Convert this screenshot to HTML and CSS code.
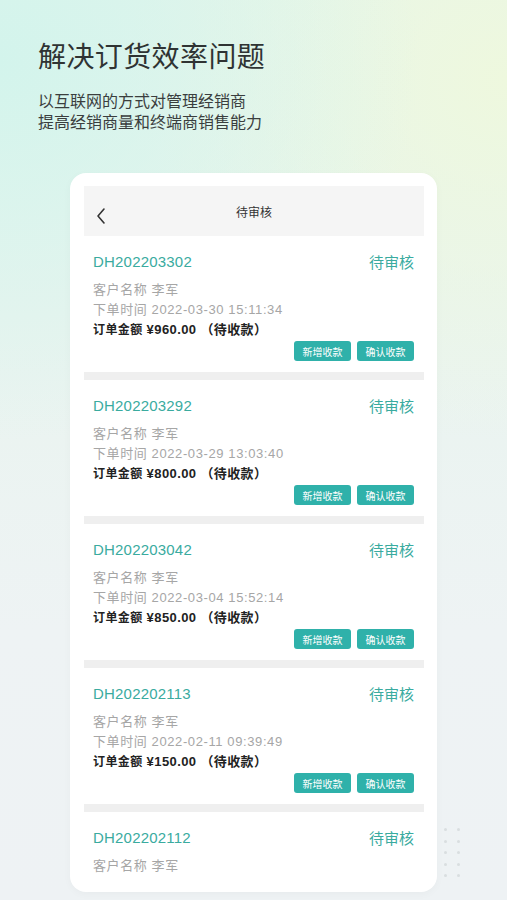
FILE: index.html
```html
<!DOCTYPE html>
<html lang="zh-CN">
<head>
    <meta charset="UTF-8">
    <meta name="viewport" content="width=device-width, initial-scale=1.0">
    <title>订货管理</title>
    <link rel="stylesheet" href="styles.css">
</head>
<body>
    <div class="page">
        <div class="intro">
            <h1>解决订货效率问题</h1>
            <p>以互联网的方式对管理经销商<br>提高经销商量和终端商销售能力</p>
        </div>

        <div class="phone">
            <div class="nav">
                <svg class="back" width="12" height="18" viewBox="0 0 12 18">
                    <path d="M9 2 L3 9 L9 16" fill="none" stroke="#333" stroke-width="1.6" stroke-linecap="round" stroke-linejoin="round"/>
                </svg>
                <span class="nav-title">待审核</span>
            </div>

            <div class="order">
                <div class="order-head"><span class="order-no">DH202203302</span><span class="order-state">待审核</span></div>
                <div class="line">客户名称 李军</div>
                <div class="line">下单时间 2022-03-30 15:11:34</div>
                <div class="amount"><span class="label">订单金额</span> ¥960.00 （待收款）</div>
                <div class="actions"><button>新增收款</button><button>确认收款</button></div>
            </div>

            <div class="order">
                <div class="order-head"><span class="order-no">DH202203292</span><span class="order-state">待审核</span></div>
                <div class="line">客户名称 李军</div>
                <div class="line">下单时间 2022-03-29 13:03:40</div>
                <div class="amount"><span class="label">订单金额</span> ¥800.00 （待收款）</div>
                <div class="actions"><button>新增收款</button><button>确认收款</button></div>
            </div>

            <div class="order">
                <div class="order-head"><span class="order-no">DH202203042</span><span class="order-state">待审核</span></div>
                <div class="line">客户名称 李军</div>
                <div class="line">下单时间 2022-03-04 15:52:14</div>
                <div class="amount"><span class="label">订单金额</span> ¥850.00 （待收款）</div>
                <div class="actions"><button>新增收款</button><button>确认收款</button></div>
            </div>

            <div class="order">
                <div class="order-head"><span class="order-no">DH202202113</span><span class="order-state">待审核</span></div>
                <div class="line">客户名称 李军</div>
                <div class="line">下单时间 2022-02-11 09:39:49</div>
                <div class="amount"><span class="label">订单金额</span> ¥150.00 （待收款）</div>
                <div class="actions"><button>新增收款</button><button>确认收款</button></div>
            </div>

            <div class="order">
                <div class="order-head"><span class="order-no">DH202202112</span><span class="order-state">待审核</span></div>
                <div class="line">客户名称 李军</div>
            </div>
        </div>

        <div class="dots">
            <i></i><i></i><i></i><i></i><i></i><i></i><i></i><i></i><i></i><i></i>
        </div>
    </div>
</body>
</html>
```

FILE: styles.css
```css
html, body {
    margin: 0;
    padding: 0;
}
body {
    font-family: "Liberation Sans", "Noto Sans CJK SC", sans-serif;
    width: 507px;
    height: 900px;
    overflow: hidden;
}
.page {
    position: relative;
    height: 900px;
    box-sizing: border-box;
    padding-top: 39px;
    background:
        radial-gradient(ellipse 420px 380px at 0px 60px, rgba(210, 244, 236, 0.95), rgba(210, 244, 236, 0) 100%),
        radial-gradient(ellipse 380px 360px at 507px 80px, rgba(238, 248, 222, 1), rgba(238, 248, 222, 0) 100%),
        linear-gradient(180deg, #e6f5ec 0%, #e9f4ef 35%, #eef3f4 70%, #eef2f4 100%);
}
.intro {
    padding-left: 38px;
    height: 134px;
}
.intro h1 {
    margin: 0;
    font-size: 28px;
    line-height: 38px;
    font-weight: 400;
    color: #2f3333;
    letter-spacing: 0.4px;
}
.intro p {
    margin: 14px 0 0;
    font-size: 16px;
    line-height: 21px;
    color: #3a3e3e;
}
.phone {
    margin-left: 70px;
    width: 367px;
    height: 719px;
    box-sizing: border-box;
    padding: 13px 13px 0 14px;
    background: #fff;
    border-radius: 16px;
    overflow: hidden;
    box-shadow: 0 2px 8px rgba(0, 0, 0, 0.03);
}
.nav {
    position: relative;
    height: 50px;
    background: #f5f5f5;
    display: flex;
    align-items: center;
    justify-content: center;
}
.back {
    position: absolute;
    left: 11px;
    top: 21px;
}
.nav-title {
    font-size: 12px;
    color: #333;
}
.order {
    padding: 14px 10px 11px 9px;
    border-bottom: 8px solid #efefef;
}
.order:last-child {
    border-bottom: none;
}
.order-head {
    display: flex;
    justify-content: space-between;
    align-items: center;
    height: 22px;
    margin-bottom: 8px;
    color: #3aab9f;
    font-size: 15px;
}
.order-no {
    letter-spacing: 0.2px;
}
.order-state {
    font-size: 15px;
}
.line {
    font-size: 13px;
    line-height: 20px;
    color: #a6a6a6;
    letter-spacing: 0.6px;
}
.amount {
    font-size: 13px;
    line-height: 20px;
    font-weight: bold;
    color: #222;
    letter-spacing: 0.4px;
}
.amount .label {
    font-size: 12px;
}
.actions {
    display: flex;
    justify-content: flex-end;
    gap: 6px;
    margin-top: 1px;
}
.actions button {
    width: 57px;
    height: 20px;
    padding: 0;
    border: none;
    border-radius: 3px;
    background: #2fb1aa;
    color: #fff;
    font-family: inherit;
    font-size: 10px;
}
.dots {
    position: absolute;
    left: 444px;
    top: 828px;
    display: grid;
    grid-template-columns: repeat(2, 3px);
    column-gap: 10px;
    row-gap: 8.5px;
}
.dots i {
    width: 3px;
    height: 3px;
    border-radius: 50%;
    background: #d9dee0;
}
```
